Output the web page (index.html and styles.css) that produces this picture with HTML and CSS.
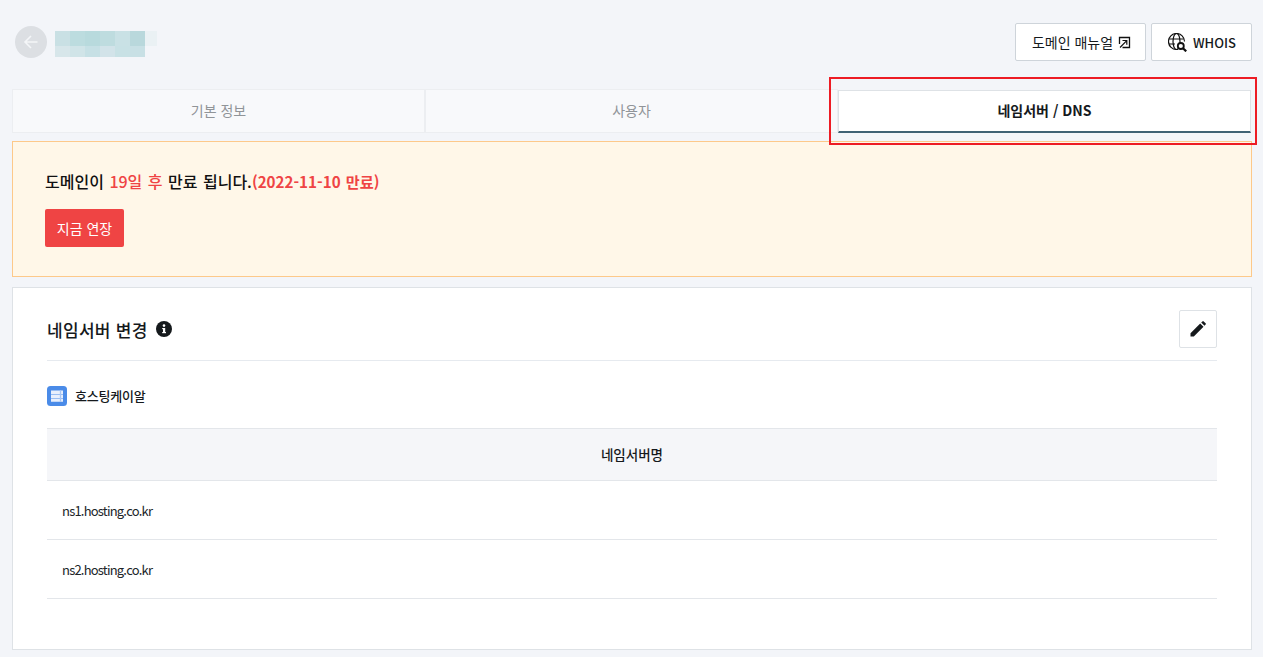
FILE: index.html
```html
<!DOCTYPE html>
<html lang="ko">
<head>
<meta charset="utf-8">
<title>네임서버 / DNS</title>
<link rel="stylesheet" href="styles.css">
</head>
<body>
<div class="page">
  <header class="top">
    <div class="top-left">
      <span class="back">
        <svg width="18" height="18" viewBox="0 0 18 18"><path d="M15.500 9H3M9 3 3 9l6 6" fill="none" stroke="#f4f6f8" stroke-width="1.600"/></svg>
      </span>
      <div class="mosaic">
        <i class="m1"></i><i class="m2"></i><i class="m3"></i><i class="m4"></i><i class="m5"></i><i class="m6"></i><i class="m7"></i><i class="m8"></i>
        <i class="m9"></i><i class="m10"></i><i class="m11"></i><i class="m12"></i><i class="m13"></i><i class="m14"></i><i class="m15"></i><i class="m16"></i>
      </div>
    </div>
    <div class="top-actions">
      <a class="btn btn-manual">도메인 매뉴얼
        <svg width="13" height="13" viewBox="0 0 13 13"><path d="M1.500 8V1.500H11.500V11.500H4.500" fill="none" stroke="#111" stroke-width="1.300"/><path d="M2 11.500 8.500 4.800M4.500 4.500H8.800V8.800" fill="none" stroke="#111" stroke-width="1.200"/></svg>
      </a>
      <a class="btn btn-whois">
        <svg width="19" height="19" viewBox="0 0 19 19"><g fill="none" stroke="#111" stroke-width="1.200"><path d="M8.500 16.500A8 8 0 1 1 16.500 8.500"/><ellipse cx="8.500" cy="8.500" rx="3.500" ry="8"/><path d="M1 6H16M1 11H7"/></g><circle cx="12.800" cy="13" r="3" fill="#fff" stroke="#111" stroke-width="1.800"/><path d="m15 15.200 3.200 3.200" stroke="#111" stroke-width="2.200"/></svg>
        WHOIS
      </a>
    </div>
  </header>

  <nav class="tabs">
    <a class="tab">기본 정보</a>
    <a class="tab">사용자</a>
    <a class="tab tab-active">네임서버 / DNS</a>
  </nav>
  <div class="highlight"></div>

  <section class="notice">
    <p class="notice-text">도메인이 <span class="red">19일 후</span> 만료 됩니다.<strong class="red">(2022-11-10 만료)</strong></p>
    <a class="renew">지금 연장</a>
  </section>

  <section class="card">
    <div class="card-head">
      <h2 class="card-title">네임서버 변경
        <svg width="16" height="16" viewBox="0 0 16 16"><circle cx="8" cy="8" r="8" fill="#15191c"/><rect x="7" y="7" width="2.200" height="5" fill="#fff"/><rect x="6.200" y="7" width="2" height="1.200" fill="#fff"/><rect x="6.200" y="11" width="3.800" height="1.200" fill="#fff"/><circle cx="8" cy="4.600" r="1.300" fill="#fff"/></svg>
      </h2>
      <a class="edit">
        <svg width="16" height="16" viewBox="0 0 16 16"><path d="M0.500 15.500V12.200L10.200 2.500 13.500 5.800 3.800 15.500Z M11.200 1.500 12.400 .4a1 1 0 0 1 1.300 0L15.600 2.300a1 1 0 0 1 0 1.300L14.500 4.800Z" fill="#15191c"/></svg>
      </a>
    </div>
    <div class="host">
      <span class="host-icon">
        <svg width="20" height="20" viewBox="0 0 20 20"><rect width="20" height="20" rx="3.500" fill="#4a8be8"/><path d="M4 4.500H16V8.200H4ZM4 8.800H16V12.200H4ZM4 12.800H16V15.800H4Z" fill="#e8effc"/><path d="M13.500 4.500V15.800" stroke="#a9c6f3" stroke-width="1.300"/></svg>
      </span>
      호스팅케이알
    </div>
    <table class="ns-table">
      <thead><tr><th>네임서버명</th></tr></thead>
      <tbody>
        <tr><td>ns1.hosting.co.kr</td></tr>
        <tr><td>ns2.hosting.co.kr</td></tr>
      </tbody>
    </table>
  </section>
</div>
</body>
</html>
```
FILE: styles.css
```css
* { box-sizing: border-box; }
html, body { margin: 0; padding: 0; }
body {
  width: 1263px;
  height: 657px;
  overflow: hidden;
  background: #f3f5f9;
  font-family: "Noto Sans CJK KR", "Noto Sans", sans-serif;
  color: #111;
}
.page { position: relative; padding: 0 11px 0 12px; }
.top {
  display: flex;
  justify-content: space-between;
  align-items: flex-start;
  height: 89px;
  padding-top: 23px;
}
.top-left { display: flex; align-items: flex-start; padding: 3px 0 0 3px; gap: 8px; }
.back {
  width: 32px; height: 32px; border-radius: 50%;
  background: #dcdfe3;
  display: flex; align-items: center; justify-content: center;
}
.mosaic {
  display: grid;
  grid-template-columns: repeat(8, 15px);
  grid-template-rows: 15px 11px;
  margin-top: 5px;
  width: 120px;
}
.m1 { background: #c9e0e4; } .m2 { background: #bcdcdf; } .m3 { background: #b8dadd; } .m4 { background: #bedcdf; }
.m5 { background: #c9e1e5; } .m6 { background: #b9d8dc; } .m7 { background: #eaf1f4; width: 12px; } .m8 { background: transparent; }
.m9 { background: #d7e6ea; } .m10 { background: #d0e4e8; } .m11 { background: #c6e0e5; } .m12 { background: #d2e3e9; }
.m13 { background: #c8e1e5; } .m14 { background: #c8e0e5; } .m15, .m16 { background: transparent; }
.top-actions { display: flex; gap: 5px; }
.btn {
  height: 38px;
  background: #fff;
  border: 1px solid #ced4da;
  border-radius: 2px;
  display: flex; align-items: center; justify-content: center;
  font-size: 14px;
  color: #15191c;
}
.btn-manual { width: 131px; gap: 5px; padding-left: 2px; }
.btn-whois { width: 101px; gap: 6px; padding-left: 1px; font-weight: 500; font-size: 13px; }
.tabs { display: flex; height: 44px; padding-right: 1px; margin-right: -1px; width: 1240px; }
.tab {
  flex: 1;
  display: flex; align-items: center; justify-content: center;
  background: #f8f9fb;
  border: 1px solid #eceef1;
  font-size: 14px;
  padding-bottom: 2px;
  color: #909498;
}
.tab-active {
  background: #fff;
  border: 1px solid #dee2e6;
  border-bottom: 2px solid #3f6275;
  color: #15191c;
  font-weight: 700;
  flex: none;
  width: 413px;
  height: 43px;
  margin-top: 1px;
}
.highlight {
  position: absolute;
  left: 829px; top: 77px;
  width: 428px; height: 68px;
  border: 2px solid #ed1c24;
  pointer-events: none;
}
.notice {
  margin-top: 8px;
  height: 136px;
  background: #fff7e8;
  border: 1px solid #fdc98a;
  padding: 28px 32px;
}
.notice-text {
  margin: 0;
  font-size: 16px;
  line-height: 22px;
  font-weight: 500;
  word-spacing: 1px;
  color: #111;
}
.red { color: #ef4444; font-weight: 500; }
.notice-text strong { font-weight: 700; font-size: 15.200px; }
.renew {
  display: flex; align-items: center; justify-content: center;
  margin-top: 17px;
  width: 79px; height: 38px;
  background: #ef4444;
  border-radius: 2px;
  color: #fff;
  font-size: 14px;
}
.card {
  margin-top: 10px;
  height: 363px;
  background: #fff;
  border: 1px solid #dee2e6;
  padding: 0 34px;
}
.card-head {
  display: flex; justify-content: space-between; align-items: center;
  padding: 22px 0 12px;
  border-bottom: 1px solid #e6eaef;
}
.card-title {
  margin: 0;
  display: flex; align-items: center; gap: 8px;
  font-size: 17px;
  letter-spacing: .3px;
  font-weight: 500;
  color: #15191c;
}
.edit {
  width: 38px; height: 38px;
  border: 1px solid #dee2e6;
  border-radius: 2px;
  display: flex; align-items: center; justify-content: center;
}
.host {
  display: flex; align-items: center; gap: 8px;
  height: 67px;
  padding-top: 1px;
  font-size: 13px;
  letter-spacing: -.2px;
  font-weight: 500;
  color: #15191c;
}
.host-icon { display: flex; margin-top: 2px; }
.ns-table { width: 100%; border-collapse: collapse; }
.ns-table th {
  height: 52px;
  padding: 0 0 2px;
  background: #f5f6f9;
  border-top: 1px solid #e3e6ea;
  border-bottom: 1px solid #e3e6ea;
  font-size: 13.500px;
  font-weight: 500;
  color: #15191c;
}
.ns-table td {
  height: 59px;
  padding: 0 15px;
  border-bottom: 1px solid #e3e6ea;
  font-size: 13px;
  letter-spacing: -.8px;
  font-weight: 400;
  color: #212529;
}
```
